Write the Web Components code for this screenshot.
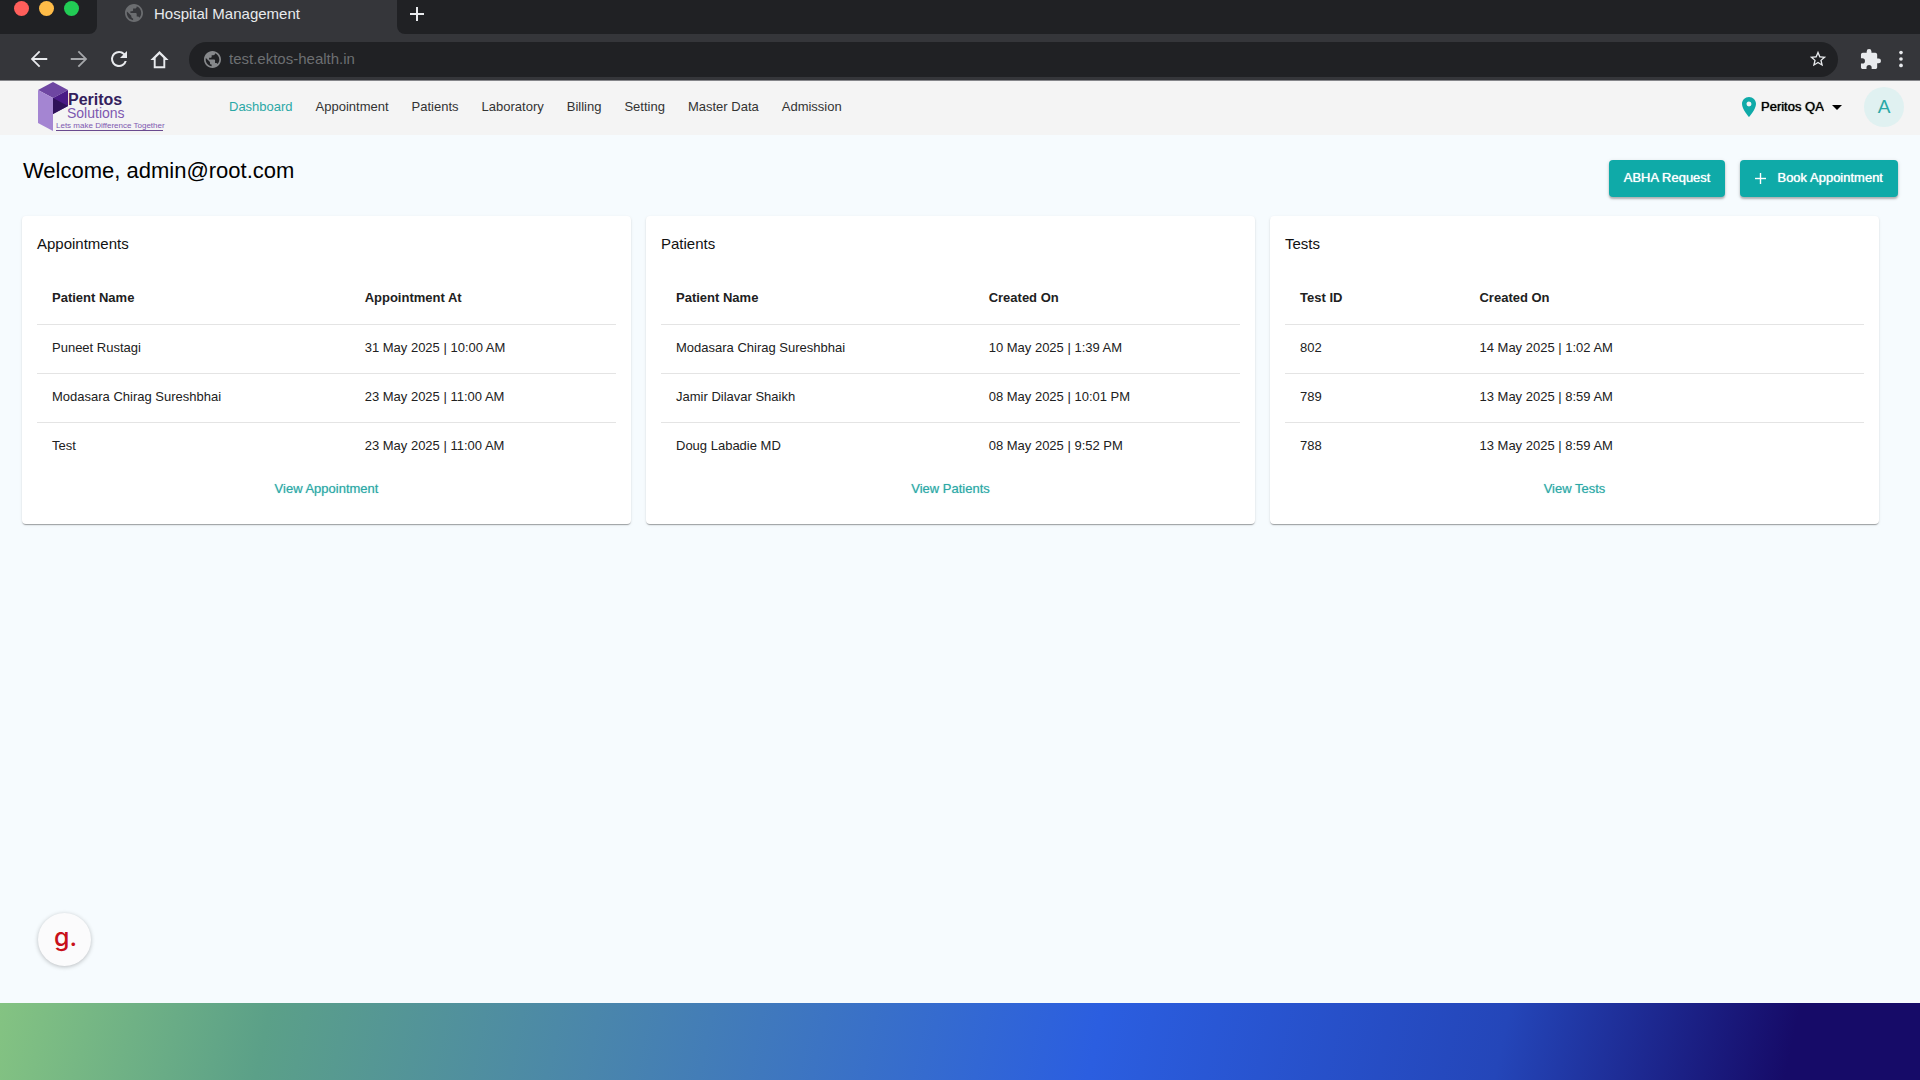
<!DOCTYPE html>
<html lang="en">
<head>
<meta charset="utf-8">
<title>Hospital Management</title>
<style>
body {
    margin: 0;
    font-family: "Liberation Sans", Arial, sans-serif;
    font-size: 13px;
    line-height: 18px;
}
</style>
</head>
<body>
<hospital-app></hospital-app>

<template id="browser-bar">
<style>
:host {
    display: block;
    background: #35363a;
    color: #e8eaed;
    border-bottom: 1px solid #85868a;
}
button {
    display: grid;
    place-items: center;
    width: 24px;
    height: 24px;
    padding: 0;
    border: 0;
    background: none;
    color: inherit;
}
svg { display: block; fill: currentColor; }
.tabs { display: flex; height: 34px; }
.lights {
    display: flex;
    gap: 10px;
    box-sizing: border-box;
    width: 97px;
    padding: 1px 0 0 14px;
    background: #202124;
    border-radius: 0 0 8px 0;
}
.lights i { width: 15px; height: 15px; border-radius: 50%; }
.tab {
    display: flex;
    gap: 11px;
    box-sizing: border-box;
    width: 300px;
    padding: 5px 0 0 28px;
    font-size: 15px;
}
.tab svg { margin-top: -1px; color: #6b6d70; }
.rest {
    flex: 1;
    padding: 2px 8px;
    background: #202124;
    border-radius: 0 0 0 8px;
}
.tools {
    display: flex;
    align-items: center;
    gap: 16px;
    height: 46px;
    padding: 4px 7px 0 27px;
    box-sizing: border-box;
}
.forward { color: #a5a7aa; }
.address {
    flex: 1;
    display: flex;
    align-items: center;
    gap: 8px;
    height: 35px;
    margin: 0 4px 0 2px;
    padding: 0 8px 0 15px;
    border-radius: 18px;
    background: #202124;
}
.address > svg { color: #86888b; }
input {
    flex: 1;
    min-width: 0;
    padding: 0;
    border: 0;
    outline: 0;
    background: none;
    color: #6d6f72;
    font: inherit;
    font-size: 15px;
}
.end { display: flex; gap: 7px; }
</style>
<div class="tabs">
    <div class="lights"><i style="background:#ff5f5b"></i><i style="background:#ffbc48"></i><i style="background:#22cc55"></i></div>
    <div class="tab">
        <svg width="18" height="18" viewBox="2 2 20 20"><path d="M12 2C6.48 2 2 6.48 2 12s4.48 10 10 10 10-4.48 10-10S17.52 2 12 2zm-1 17.93c-3.95-.49-7-3.85-7-7.93 0-.62.08-1.21.21-1.79L9 15v1c0 1.100.9 2 2 2v1.930zm6.900-2.540c-.260-.810-1-1.390-1.900-1.390h-1v-3c0-.550-.450-1-1-1H8v-2h2c.550 0 1-.450 1-1V7h2c1.100 0 2-.900 2-2v-.410c2.930 1.190 5 4.060 5 7.410 0 2.080-.800 3.970-2.100 5.390z"/></svg>
        <span>Hospital Management</span>
    </div>
    <div class="rest"><button aria-label="New tab"><svg width="16" height="16" viewBox="0 0 16 16"><path d="M7 1h2v6h6v2H9v6H7V9H1V7h6z"/></svg></button></div>
</div>
<div class="tools">
    <button aria-label="Back"><svg width="22" height="22" viewBox="0 0 24 24"><path d="M21 11H6.800l6.600-6.600L12 3l-9 9 9 9 1.400-1.400L6.800 13H21z"/></svg></button>
    <button class="forward" aria-label="Forward"><svg width="22" height="22" viewBox="0 0 24 24"><path d="M3 11h14.200l-6.600-6.600L12 3l9 9-9 9-1.400-1.400 6.600-6.600H3z"/></svg></button>
    <button aria-label="Reload"><svg width="24" height="24" viewBox="0 0 24 24"><path d="M17.650 6.350A7.960 7.960 0 0 0 12 4a8 8 0 1 0 7.730 10h-2.080A6 6 0 1 1 12 6c1.660 0 3.140.690 4.220 1.780L13 11h7V4z"/></svg></button>
    <button aria-label="Home"><svg width="23" height="23" viewBox="0 0 24 24"><path d="M12 3 2.500 12.500H6V21h12v-8.500h3.500zM8 19v-8.500l4-4 4 4V19z"/></svg></button>
    <div class="address">
        <svg width="17" height="17" viewBox="2 2 20 20"><path d="M12 2C6.48 2 2 6.48 2 12s4.48 10 10 10 10-4.48 10-10S17.52 2 12 2zm-1 17.93c-3.95-.49-7-3.85-7-7.93 0-.62.08-1.21.21-1.79L9 15v1c0 1.100.9 2 2 2v1.930zm6.900-2.540c-.260-.810-1-1.390-1.900-1.390h-1v-3c0-.550-.450-1-1-1H8v-2h2c.550 0 1-.450 1-1V7h2c1.100 0 2-.900 2-2v-.410c2.930 1.190 5 4.060 5 7.410 0 2.080-.800 3.970-2.100 5.390z"/></svg>
        <input aria-label="Address" value="test.ektos-health.in">
        <button aria-label="Bookmark"><svg width="18" height="18" viewBox="1 1 22 22"><path d="M22 9.240l-7.190-.620L12 2 9.190 8.630 2 9.240l5.460 4.730L5.820 21 12 17.270 18.180 21l-1.630-7.030zM12 15.400l-3.760 2.270 1-4.280-3.320-2.880 4.380-.380L12 6.100l1.710 4.040 4.380.380-3.320 2.880 1 4.280z"/></svg></button>
    </div>
    <div class="end">
        <button aria-label="Extensions"><svg width="21" height="21" viewBox="1 1 22 22"><path d="M20.500 11H19V7c0-1.100-.900-2-2-2h-4V3.500a2.500 2.500 0 0 0-5 0V5H4c-1.100 0-2 .900-2 2v3.800h1.500a2.700 2.700 0 0 1 0 5.400H2V20c0 1.100.900 2 2 2h3.800v-1.500a2.700 2.700 0 0 1 5.400 0V22H17c1.100 0 2-.900 2-2v-4h1.500a2.500 2.500 0 0 0 0-5z"/></svg></button>
        <button aria-label="Menu"><svg width="22" height="22" viewBox="0 0 24 24"><circle cx="12" cy="5" r="2"/><circle cx="12" cy="12" r="2"/><circle cx="12" cy="19" r="2"/></svg></button>
    </div>
</div>
</template>

<template id="app-header">
<style>
:host {
    display: flex;
    align-items: center;
    box-sizing: border-box;
    height: 54px;
    padding: 0 16px 2px 38px;
    background: #f4f4f4;
}
.logo { display: block; margin-right: 63px; }
.logo svg { display: block; }
nav { flex: 1; display: flex; gap: 23px; }
a { color: #333; text-decoration: none; }
a.active { color: #2ba8a6; }
label { display: flex; align-items: center; gap: 5px; }
select {
    appearance: none;
    padding: 0 19px 0 0;
    border: 0;
    background: none;
    color: #000;
    font: inherit;
    text-shadow: 0 0 1px currentColor;
}
/* arrow sits over the right padding of the select */
.arrow { margin-left: -16px; pointer-events: none; }
.avatar {
    width: 40px;
    height: 40px;
    margin-left: 22px;
    padding: 0;
    border: 0;
    border-radius: 50%;
    background: #e0f1f1;
    color: #2ba8a6;
    font: inherit;
    font-size: 19px;
}
</style>
<a class="logo" href="#" aria-label="Peritos Solutions">
    <svg width="128" height="52" viewBox="0 0 128 52" font-family="Liberation Sans, Arial, sans-serif">
        <path fill="#6e46a2" d="M15 1 30 9 15 17 0 9z"/>
        <path fill="#a485d2" d="M0 9l15 8v33L0 42z"/>
        <path fill="#4a1a86" d="M15 17 30 9v16l-15 8z"/>
        <path fill="#2f1259" d="M15 17l15 8-15 8z"/>
        <text x="30" y="24" font-size="16" font-weight="700" fill="#33205c">Peritos</text>
        <text x="29" y="37" font-size="14" fill="#7e58b0">Solutions</text>
        <text x="18" y="47" font-size="8" fill="#7e58b0">Lets make Difference Together</text>
        <path fill="#6a4a8e" d="M18 49h107v1H18z"/>
    </svg>
</a>
<nav>
    <a class="active" href="#">Dashboard</a>
    <a href="#">Appointment</a>
    <a href="#">Patients</a>
    <a href="#">Laboratory</a>
    <a href="#">Billing</a>
    <a href="#">Setting</a>
    <a href="#">Master Data</a>
    <a href="#">Admission</a>
</nav>
<label>
    <svg width="14" height="20" viewBox="5 2 14 20"><path fill="#0faaa8" d="M12 2C8.130 2 5 5.130 5 9c0 5.250 7 13 7 13s7-7.750 7-13c0-3.870-3.130-7-7-7zm0 9.500a2.500 2.500 0 0 1 0-5 2.500 2.500 0 0 1 0 5z"/></svg>
    <select aria-label="Location"><option>Peritos QA</option></select>
    <svg class="arrow" width="10" height="5" viewBox="0 0 10 5"><path d="M0 0h10L5 5z"/></svg>
</label>
<button class="avatar">A</button>
</template>

<template id="action-button">
<style>
:host { display: block; }
button {
    display: flex;
    align-items: center;
    height: 37px;
    padding: 0 15px 1px;
    border: 0;
    border-radius: 4px;
    background: #0faaa8;
    box-shadow: 0 2px 2px rgba(0, 0, 0, .24), 0 1px 4px rgba(0, 0, 0, .12);
    color: #fff;
    font: inherit;
    text-shadow: 0 0 1px currentColor;
}
::slotted(svg) { margin-right: 11px; }
</style>
<button><slot name="icon"></slot><slot></slot></button>
</template>

<template id="summary-card">
<style>
:host {
    display: block;
    padding: 16px 15px 26px;
    background: #fff;
    border-radius: 4px;
    box-shadow: 0 2px 1px -1px rgba(0, 0, 0, .2), 0 1px 1px rgba(0, 0, 0, .14), 0 1px 3px rgba(0, 0, 0, .1);
}
h2 {
    margin: 0 0 15px;
    font-size: 15px;
    font-weight: 400;
    line-height: 24px;
    color: #111;
}
table {
    width: 100%;
    border-collapse: collapse;
    table-layout: fixed;
    color: #212121;
}
th { height: 53px; padding: 0 15px; text-align: left; }
td { height: 46px; padding: 0 15px 2px; }
thead tr, tbody tr:not(:last-child) { border-bottom: 1px solid #e4e4e4; }
.more { display: flex; justify-content: center; padding-top: 9px; }
a { color: #2ba8a6; text-decoration: none; text-shadow: 0 0 1px rgba(43, 168, 166, .5); }
</style>
<h2></h2>
<table><thead><tr></tr></thead><tbody></tbody></table>
<div class="more"><a href="#"><slot></slot></a></div>
</template>

<template id="hospital-app">
<style>
:host { display: flex; flex-direction: column; min-height: 100vh; }
main {
    position: relative;
    flex: 1;
    padding: 25px 22px;
    background: #f6fbfe;
}
.top { display: flex; align-items: flex-start; justify-content: space-between; height: 56px; }
h1 { margin: 0; padding-left: 1px; font-size: 22px; font-weight: 400; line-height: 22px; color: #000; }
.actions { display: flex; gap: 15px; }
.cards { display: grid; grid-template-columns: repeat(3, 1fr); gap: 15px; margin-right: 19px; }
.chat {
    position: absolute;
    left: 38px;
    bottom: 37px;
    width: 53px;
    height: 53px;
    padding: 0 0 6px 2px;
    border: 0;
    border-radius: 50%;
    background: #fbfbfc;
    box-shadow: 0 1px 4px rgba(0, 0, 0, .25);
    color: #c8101a;
    font: 500 25px Inter, sans-serif;
}
footer {
    height: 77px;
    background: linear-gradient(102deg, #84c382 0%, #5ba088 14%, #4a86ab 31%, #2b5ee0 57%, #2446b9 78%, #160b68 93%);
}
</style>
<browser-bar></browser-bar>
<app-header></app-header>
<main>
    <div class="top">
        <h1>Welcome, admin@root.com</h1>
        <div class="actions">
            <action-button>ABHA Request</action-button>
            <action-button><svg slot="icon" width="11" height="11" viewBox="0 0 11 11" fill="#fff"><path d="M5 0h1v5h5v1H6v5H5V6H0V5h5z" stroke="#fff" stroke-width=".4"/></svg>Book Appointment</action-button>
        </div>
    </div>
    <div class="cards">
        <summary-card heading="Appointments" list="appointments" first="54%">View Appointment</summary-card>
        <summary-card heading="Patients" list="patients" first="54%">View Patients</summary-card>
        <summary-card heading="Tests" list="tests" first="31%">View Tests</summary-card>
    </div>
    <button class="chat" aria-label="Feedback">g.</button>
</main>
<footer></footer>
</template>

<script>
const lists = {
    appointments: {
        columns: ['Patient Name', 'Appointment At'],
        rows: [
            ['Puneet Rustagi', '31 May 2025 | 10:00 AM'],
            ['Modasara Chirag Sureshbhai', '23 May 2025 | 11:00 AM'],
            ['Test', '23 May 2025 | 11:00 AM']
        ]
    },
    patients: {
        columns: ['Patient Name', 'Created On'],
        rows: [
            ['Modasara Chirag Sureshbhai', '10 May 2025 | 1:39 AM'],
            ['Jamir Dilavar Shaikh', '08 May 2025 | 10:01 PM'],
            ['Doug Labadie MD', '08 May 2025 | 9:52 PM']
        ]
    },
    tests: {
        columns: ['Test ID', 'Created On'],
        rows: [
            ['802', '14 May 2025 | 1:02 AM'],
            ['789', '13 May 2025 | 8:59 AM'],
            ['788', '13 May 2025 | 8:59 AM']
        ]
    }
};

class TemplateElement extends HTMLElement {
    constructor() {
        super();
        this.attachShadow({mode: 'open'});
        const template = document.getElementById(this.localName);
        this.shadowRoot.appendChild(template.content.cloneNode(true));
    }
}

class BrowserBar extends TemplateElement {}
class AppHeader extends TemplateElement {}
class ActionButton extends TemplateElement {}
class HospitalApp extends TemplateElement {}

class SummaryCard extends TemplateElement {

    connectedCallback() {
        this.render();
    }

    render() {
        const list = lists[this.getAttribute('list')];
        this.shadowRoot.querySelector('h2').textContent = this.getAttribute('heading');

        const head = this.shadowRoot.querySelector('thead tr');
        head.replaceChildren(...list.columns.map(text => this.cell('th', text)));
        head.firstChild.style.width = this.getAttribute('first');
        head.firstChild.style.boxSizing = 'border-box';

        const body = this.shadowRoot.querySelector('tbody');
        body.replaceChildren(...list.rows.map(row => {
            const tr = document.createElement('tr');
            tr.append(...row.map(text => this.cell('td', text)));
            return tr;
        }));
    }

    cell(tag, text) {
        const cell = document.createElement(tag);
        cell.textContent = text;
        return cell;
    }
}

customElements.define('browser-bar', BrowserBar);
customElements.define('app-header', AppHeader);
customElements.define('action-button', ActionButton);
customElements.define('summary-card', SummaryCard);
customElements.define('hospital-app', HospitalApp);
</script>
</body>
</html>
